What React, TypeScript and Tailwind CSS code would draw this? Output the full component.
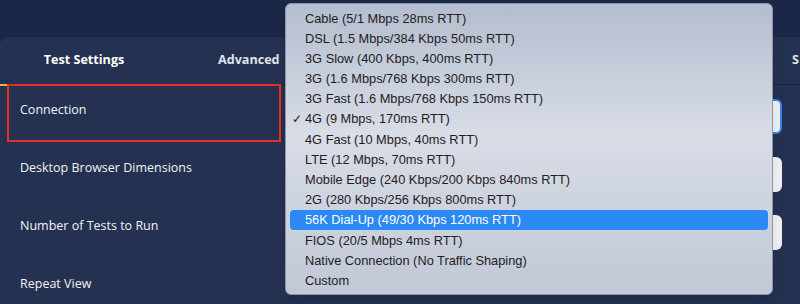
import React from "react";

const options = [
  "Cable (5/1 Mbps 28ms RTT)",
  "DSL (1.5 Mbps/384 Kbps 50ms RTT)",
  "3G Slow (400 Kbps, 400ms RTT)",
  "3G (1.6 Mbps/768 Kbps 300ms RTT)",
  "3G Fast (1.6 Mbps/768 Kbps 150ms RTT)",
  "4G (9 Mbps, 170ms RTT)",
  "4G Fast (10 Mbps, 40ms RTT)",
  "LTE (12 Mbps, 70ms RTT)",
  "Mobile Edge (240 Kbps/200 Kbps 840ms RTT)",
  "2G (280 Kbps/256 Kbps 800ms RTT)",
  "56K Dial-Up (49/30 Kbps 120ms RTT)",
  "FIOS (20/5 Mbps 4ms RTT)",
  "Native Connection (No Traffic Shaping)",
  "Custom",
];

const checked = "4G (9 Mbps, 170ms RTT)";
const highlighted = "56K Dial-Up (49/30 Kbps 120ms RTT)";

const rows = [
  { label: "Connection", input: true, focused: true },
  { label: "Desktop Browser Dimensions", input: true },
  { label: "Number of Tests to Run", input: true },
  { label: "Repeat View" },
];

export default function App() {
  return (
    <div className="relative h-[304px] w-[800px] overflow-hidden bg-[#1b2747] font-['Open_Sans',sans-serif]">
      <div className="h-[37px]" />
      <div className="h-[267px] rounded-tl-lg bg-[#243150]">
        {/* tabs */}
        <div className="relative flex h-[48px] items-center border-b border-[#1a2440] text-[12.6px] font-bold">
          <div className="w-[168px] text-center text-white">Test Settings</div>
          <div className="pl-[50px] text-[#dfe3ea]">Advanced</div>
          <div className="ml-auto pr-px text-[#dfe3ea]">S</div>
          <div className="absolute bottom-[-2px] left-0 h-[2px] w-[171px] bg-[#e2b544]" />
        </div>
        {rows.map((row) => (
          <div key={row.label} className="flex h-[58px] items-start justify-between">
            <div className="pl-5 pt-[15px] text-[12.5px] leading-5 text-[#f2f4f8]">
              {row.label}
            </div>
            {row.input && (
              <div
                className={`mr-[18px] mt-[14px] h-[35px] w-[100px] rounded-md bg-[#eef0f4] ${
                  row.focused ? "border-2 border-[#3b82f6]" : ""
                }`}
              />
            )}
          </div>
        ))}
      </div>

      {/* highlight box */}
      <div className="absolute left-[7px] top-[84px] h-[58px] w-[274px] border-2 border-[#e3311d]" />

      {/* dropdown */}
      <div className="absolute left-[285px] top-[3px] h-[292px] w-[488px] rounded-md border border-[#8d96a8] bg-linear-to-b from-[#b4bdcf] via-[#d8dde6] via-45% to-[#c1c8d6] p-[4px] font-['Liberation_Sans',Arial,sans-serif] text-[12.8px] text-[#1f2024] shadow-lg">
        {options.map((opt) => {
          const hi = opt === highlighted;
          return (
            <div
              key={opt}
              className={`relative flex h-[20.2px] items-center rounded-[4px] pl-[15px] ${
                hi ? "bg-[#2b88f5] text-white" : ""
              }`}
            >
              {opt === checked && (
                <span className="absolute left-[2px] text-[12px]">✓</span>
              )}
              {opt}
            </div>
          );
        })}
      </div>
    </div>
  );
}
